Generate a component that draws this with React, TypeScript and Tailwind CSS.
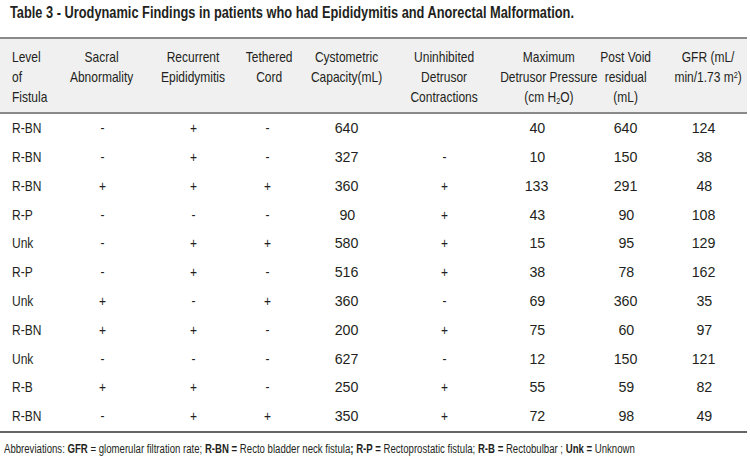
import React from "react";

const rows: string[][] = [
  ["R-BN", "-", "+", "-", "640", "", "40", "640", "124"],
  ["R-BN", "-", "+", "-", "327", "-", "10", "150", "38"],
  ["R-BN", "+", "+", "+", "360", "+", "133", "291", "48"],
  ["R-P", "-", "-", "-", "90", "+", "43", "90", "108"],
  ["Unk", "-", "+", "+", "580", "+", "15", "95", "129"],
  ["R-P", "-", "+", "-", "516", "+", "38", "78", "162"],
  ["Unk", "+", "-", "+", "360", "-", "69", "360", "35"],
  ["R-BN", "+", "+", "-", "200", "+", "75", "60", "97"],
  ["Unk", "-", "-", "-", "627", "-", "12", "150", "121"],
  ["R-B", "+", "+", "-", "250", "+", "55", "59", "82"],
  ["R-BN", "-", "+", "+", "350", "+", "72", "98", "49"],
];

const grid =
  "grid grid-cols-[58px_88px_94px_54px_106px_88px_98px_80px_76px]";

function H({ children }: { children: React.ReactNode }) {
  return (
    <div className="text-center whitespace-nowrap">
      <span className="inline-block scale-x-[0.8]">{children}</span>
    </div>
  );
}

export default function App() {
  return (
    <div
      className="w-[750px] h-[459px] bg-white text-[#231f20] overflow-hidden"
      style={{ fontFamily: '"Liberation Sans", Arial, sans-serif' }}
    >
      <div className="pl-[10px] pt-[3px] h-[37px] text-[16px] leading-5 font-bold whitespace-nowrap">
        <span className="inline-block origin-left scale-x-[0.8]">
          Table 3 - Urodynamic Findings in patients who had Epididymitis and Anorectal Malformation.
        </span>
      </div>
      <div className="w-[747px]">
        <div className="border-t-2 border-b-2 border-[#8a8a8a] bg-[#f0f0f0] pt-2 pb-[5px] text-[15px] leading-5">
          <div className={grid}>
            <div className="pl-3 whitespace-nowrap">
              <span className="inline-block origin-left scale-x-[0.8]">Level<br />of<br />Fistula</span>
            </div>
            <H>Sacral<br />Abnormality</H>
            <H>Recurrent<br />Epididymitis</H>
            <H>Tethered<br />Cord</H>
            <H>Cystometric<br />Capacity(mL)</H>
            <H>Uninhibited<br />Detrusor<br />Contractions</H>
            <H>Maximum<br />Detrusor Pressure<br />(cm H<sub className="text-[9px]">2</sub>O)</H>
            <H>Post Void<br />residual<br />(mL)</H>
            <H>GFR (mL/<br />min/1.73 m<sup className="text-[9px]">2</sup>)</H>
          </div>
        </div>
        <div className="border-b-2 border-[#666] text-[15px]">
          {rows.map((r, i) => (
            <div key={i} className={`${grid} h-[28.8px] items-center`}>
              {r.map((c, j) => {
                const isNum = /^\d+$/.test(c);
                const sc = isNum ? "scale-x-[0.95]" : "scale-x-[0.8]";
                return (
                  <div key={j} className={j === 0 ? "pl-3 whitespace-nowrap" : "text-center whitespace-nowrap"}>
                    <span className={`inline-block ${sc} ${j === 0 ? "origin-left" : ""}`}>{c}</span>
                  </div>
                );
              })}
            </div>
          ))}
        </div>
      </div>
      <div className="pl-1 pt-[8px] text-[12px] leading-4 whitespace-nowrap">
        <span className="inline-block origin-left scale-x-[0.8]">
          Abbreviations: <b>GFR</b> = glomerular filtration rate; <b>R-BN =</b> Recto bladder neck fistula<b>; R-P =</b> Rectoprostatic fistula; <b>R-B =</b> Rectobulbar ; <b>Unk =</b> Unknown
        </span>
      </div>
    </div>
  );
}
